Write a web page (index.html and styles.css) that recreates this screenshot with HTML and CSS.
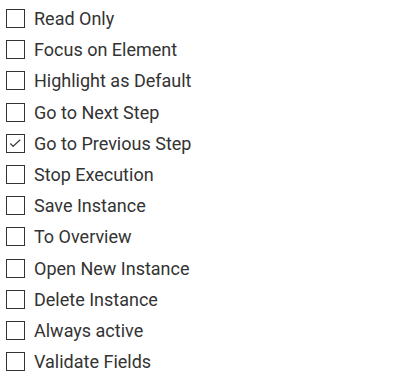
FILE: index.html
```html
<html>
  <head>
    <link rel="stylesheet" href="styles.css">
  </head>
  <body>
    <div class="options">
      <label class="option"><span class="box"></span>Read Only</label>
      <label class="option"><span class="box"></span>Focus on Element</label>
      <label class="option"><span class="box"></span>Highlight as Default</label>
      <label class="option"><span class="box"></span>Go to Next Step</label>
      <label class="option">
        <span class="box">
          <svg viewBox="0 0 18 18" width="18" height="18">
            <polyline points="3.5,9.5 6.5,12.5 14,5.5" fill="none" stroke="#444" stroke-width="1.3" />
          </svg>
        </span>Go to Previous Step
      </label>
      <label class="option"><span class="box"></span>Stop Execution</label>
      <label class="option"><span class="box"></span>Save Instance</label>
      <label class="option"><span class="box"></span>To Overview</label>
      <label class="option"><span class="box"></span>Open New Instance</label>
      <label class="option"><span class="box"></span>Delete Instance</label>
      <label class="option"><span class="box"></span>Always active</label>
      <label class="option"><span class="box"></span>Validate Fields</label>
    </div>
  </body>
</html>
```
FILE: styles.css
```css
* {
  box-sizing: border-box;
}

body {
  margin: 0;
  padding: 3px 0 0 6px;
  font-family: Roboto, sans-serif;
  font-size: 18px;
  color: #333;
  background: #fff;
}

.options {
  display: flex;
  flex-direction: column;
}

.option {
  display: flex;
  align-items: center;
  gap: 9px;
  height: 31.2px;
}

.box {
  width: 19px;
  height: 19px;
  border: 1.3px solid #333;
  display: flex;
  align-items: center;
  justify-content: center;
  flex-shrink: 0;
}
```
